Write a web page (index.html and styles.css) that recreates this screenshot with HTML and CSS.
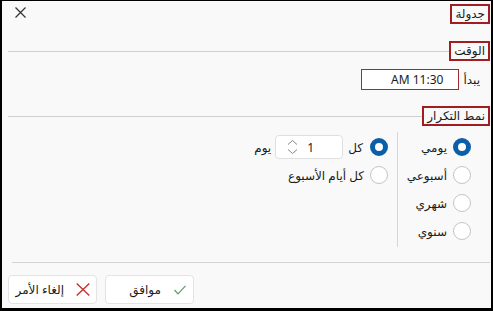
FILE: index.html
```html
<!DOCTYPE html>
<html lang="ar" dir="rtl">
<head>
<meta charset="UTF-8">
<meta name="viewport" content="width=device-width, initial-scale=1.0">
<title>جدولة</title>
<link rel="stylesheet" href="styles.css">
</head>
<body>
<div class="dialog">
    <div class="titlebar">
        <div class="tag">جدولة</div>
        <button class="close" aria-label="إغلاق">
            <svg width="11" height="11" viewBox="0 0 11 11"><path d="M0.5 0.5L10.5 10.5M10.5 0.5L0.5 10.5" stroke="#333" stroke-width="1.2" fill="none"/></svg>
        </button>
    </div>

    <div class="section sec-time">
        <div class="tag">الوقت</div>
        <div class="rule"></div>
    </div>
    <div class="start-row">
        <span>يبدأ</span>
        <div class="time-box">11:30 AM</div>
    </div>

    <div class="section sec-repeat">
        <div class="tag">نمط التكرار</div>
        <div class="rule"></div>
    </div>
    <div class="repeat">
        <div class="kinds">
            <label class="opt"><span class="radio on"></span>يومي</label>
            <label class="opt"><span class="radio"></span>أسبوعي</label>
            <label class="opt"><span class="radio"></span>شهري</label>
            <label class="opt"><span class="radio"></span>سنوي</label>
        </div>
        <div class="details">
            <div class="opt every">
                <span class="radio on"></span>
                <span>كل</span>
                <div class="spin">
                    <span class="spin-value">1</span>
                    <span class="spin-arrows">
                        <svg width="11" height="16" viewBox="0 0 11 16"><path d="M1 5.5L5.5 1.5L10 5.5M1 10.5L5.5 14.5L10 10.5" stroke="#888" stroke-width="1" fill="none"/></svg>
                    </span>
                </div>
                <span>يوم</span>
            </div>
            <label class="opt"><span class="radio"></span>كل أيام الأسبوع</label>
        </div>
    </div>

    <div class="footer-rule"></div>
    <div class="buttons">
        <button class="btn">
            <span class="btn-icon">
                <svg width="12" height="10" viewBox="0 0 12 10"><path d="M0.5 5L4 8.8L11.5 0.8" stroke="#5f9a6a" stroke-width="1.2" fill="none"/></svg>
            </span>
            موافق
        </button>
        <button class="btn">
            <span class="btn-icon">
                <svg width="14" height="13" viewBox="0 0 14 13"><path d="M0.7 0.5L13.3 12.5M13.3 0.5L0.7 12.5" stroke="#c8322a" stroke-width="1.4" fill="none"/></svg>
            </span>
            إلغاء الأمر
        </button>
    </div>
</div>
</body>
</html>
```

FILE: styles.css
```css
body {
    margin: 0;
    font-family: "Noto Sans", "DejaVu Sans", sans-serif;
    font-size: 12px;
    color: #1b1b1b;
}
.dialog {
    width: 493px;
    height: 311px;
    box-sizing: border-box;
    border: 2px solid #000;
    border-top-width: 1px;
    border-bottom-width: 3px;
    background-color: #f9f9f9;
    padding: 3px 1px 0 6px;
}
.titlebar {
    display: flex;
    justify-content: space-between;
    align-items: flex-start;
}
.tag {
    border: 2px solid #a11d21;
    height: 20px;
    line-height: 15px;
    padding: 0 3px;
    box-sizing: border-box;
    white-space: nowrap;
}
.close {
    background: none;
    border: none;
    padding: 0;
    margin: 3px 0 0 7px;
    width: 11px;
    height: 11px;
    display: flex;
}
.section {
    display: flex;
    align-items: center;
}
.sec-time {
    margin-top: 17px;
}
.sec-repeat {
    margin-top: 16px;
}
.rule {
    flex: 1;
    height: 1px;
    background-color: #cfcfcf;
}
.start-row {
    display: flex;
    align-items: center;
    gap: 4px;
    padding-right: 10px;
    margin-top: 8px;
}
.time-box {
    width: 98px;
    height: 21px;
    box-sizing: border-box;
    border: 1px solid #a52a2e;
    background-color: #fff;
    line-height: 19px;
    padding-right: 15px;
}
.repeat {
    display: flex;
    margin-top: 6px;
    height: 115px;
}
.kinds {
    width: 93px;
    box-sizing: border-box;
    padding: 1px 19px 0 0;
    border-left: 1px solid #d6d6d6;
}
.opt {
    display: flex;
    align-items: center;
    gap: 6px;
    height: 28px;
}
.radio {
    width: 18px;
    height: 18px;
    box-sizing: border-box;
    border: 1px solid #c4c4c4;
    border-radius: 50%;
    background-color: #fff;
    flex: none;
}
.radio.on {
    border: 5px solid #0a5fa8;
}
.details {
    padding: 1px 9px 0 0;
}
.every {
    gap: 0;
}
.every .radio {
    margin-left: 7px;
}
.every span + span {
    margin-left: 5px;
}
.spin {
    display: flex;
    align-items: center;
    width: 68px;
    height: 24px;
    box-sizing: border-box;
    border: 1px solid #e0e0e0;
    border-radius: 4px;
    background-color: #fff;
    margin-left: 4px;
}
.spin-value {
    flex: 1;
    padding-right: 28px;
}
.spin-arrows {
    display: flex;
    padding-left: 6px;
}
.footer-rule {
    height: 1px;
    background-color: #d4d4d4;
    margin: 15px 0 0 4px;
}
.buttons {
    display: flex;
    justify-content: flex-end;
    gap: 8px;
    margin-top: 12px;
    padding-left: 0;
}
.btn {
    display: flex;
    align-items: center;
    gap: 6px;
    width: 89px;
    height: 29px;
    padding: 0;
    border: 1px solid #e3e3e3;
    border-radius: 4px;
    background-color: #fff;
    font: inherit;
    color: #1b1b1b;
}
.btn-icon {
    width: 26px;
    display: flex;
    justify-content: center;
}
```
